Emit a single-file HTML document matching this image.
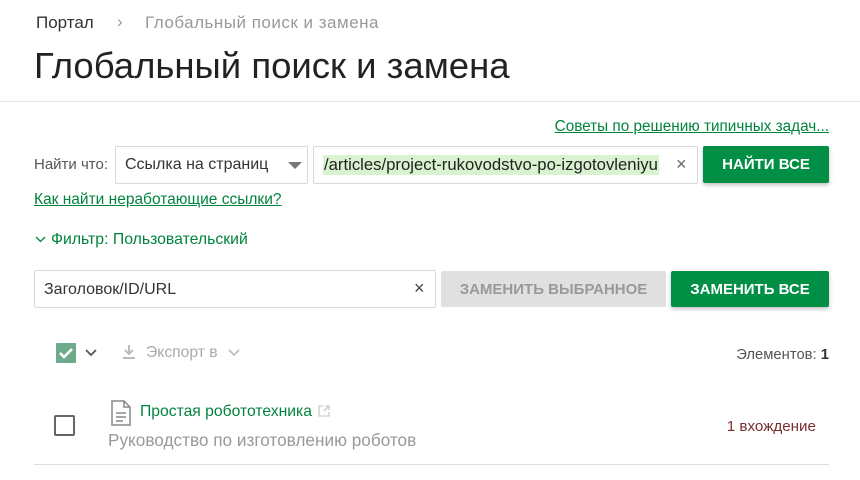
<!DOCTYPE html>
<html><head><meta charset="utf-8"><style>
*{box-sizing:border-box;margin:0;padding:0}
body{width:860px;height:480px;background:#fff;font-family:"Liberation Sans",sans-serif;color:#333;position:relative;overflow:hidden}
.a{position:absolute;white-space:nowrap}
.g{color:#00843d}
.box{position:absolute;border:1px solid #d9d9d9;border-radius:2px;background:#fff}
.btn{position:absolute;border-radius:2px;font-weight:bold;font-size:15px;color:#fff;background:#008f45;display:flex;align-items:center;justify-content:center;box-shadow:0 2px 4px rgba(0,0,0,.25)}
</style></head><body>
<div class="a" style="left:36px;top:13px;font-size:17px;color:#333">Портал</div>
<div class="a" style="left:117px;top:12px;font-size:17px;color:#999">›</div>
<div class="a" style="left:145px;top:13px;font-size:17px;letter-spacing:0.5px;color:#999">Глобальный поиск и замена</div>
<div class="a" style="left:34px;top:45px;font-size:36.5px;color:#222">Глобальный поиск и замена</div>
<div class="a" style="left:0;top:101px;width:860px;height:1px;background:#e6e6e6"></div>
<div class="a g" style="right:31px;top:118px;font-size:15.3px;text-decoration:underline">Советы по решению типичных задач...</div>
<div class="a" style="left:34px;top:156px;font-size:15px;color:#555">Найти что:</div>
<div class="box" style="left:115px;top:146px;width:193px;height:38px;overflow:hidden"><span class="a" style="left:9px;top:9px;font-size:16px;color:#333;width:143px;overflow:hidden">Ссылка на страницу</span><span class="a" style="left:172px;top:15px;width:0;height:0;border-left:7px solid transparent;border-right:7px solid transparent;border-top:7px solid #777"></span></div>
<div class="box" style="left:313px;top:146px;width:385px;height:38px;overflow:hidden"><span class="a" style="left:9px;top:8px;font-size:16.7px;color:#222;background:#d9f2cf;padding:0 1px">/articles/project-rukovodstvo-po-izgotovleniyu</span><span class="a" style="left:362px;top:7px;font-size:18px;color:#666">×</span></div>
<div class="btn" style="left:703px;top:146px;width:126px;height:37px">НАЙТИ ВСЕ</div>
<div class="a g" style="left:34px;top:191px;font-size:15.5px;text-decoration:underline">Как найти неработающие ссылки?</div>
<svg class="a" style="left:35px;top:236px" width="11" height="8"><path d="M1 1l4.5 4.5L10 1" stroke="#00843d" stroke-width="1.3" fill="none"/></svg>
<div class="a g" style="left:51px;top:231px;font-size:15.8px">Фильтр: Пользовательский</div>
<div class="box" style="left:34px;top:270px;width:402px;height:38px"><span class="a" style="left:9px;top:10px;font-size:16px;color:#333">Заголовок/ID/URL</span><span class="a" style="left:379px;top:7px;font-size:18px;color:#444">×</span></div>
<div class="a" style="left:441px;top:271px;width:225px;height:36px;background:#e0e0e0;border-radius:2px;color:#999;font-weight:bold;font-size:15px;display:flex;align-items:center;justify-content:center">ЗАМЕНИТЬ ВЫБРАННОЕ</div>
<div class="btn" style="left:671px;top:271px;width:158px;height:36px">ЗАМЕНИТЬ ВСЕ</div>
<div class="a" style="left:56px;top:343px;width:20px;height:20px;background:#6fa98c;border-radius:1px"></div>
<svg class="a" style="left:56px;top:343px" width="20" height="20"><path d="M4 10l4 4 8-8" stroke="#fff" stroke-width="2.6" fill="none"/></svg>
<svg class="a" style="left:85px;top:349px" width="12" height="8"><path d="M1 1l5 5 5-5" stroke="#555" stroke-width="1.8" fill="none"/></svg>
<svg class="a" style="left:121px;top:344px" width="16" height="16"><path d="M8 1v9M4 6l4 4 4-4M2 14h12" stroke="#bbb" stroke-width="2" fill="none"/></svg>
<div class="a" style="left:146px;top:344px;font-size:15.7px;color:#aaa">Экспорт в</div>
<svg class="a" style="left:228px;top:349px" width="12" height="8"><path d="M1 1l5 5 5-5" stroke="#bbb" stroke-width="1.6" fill="none"/></svg>
<div class="a" style="right:31px;top:347px;font-size:14.8px;color:#555">Элементов: <b style="color:#333">1</b></div>
<div class="a" style="left:54px;top:415px;width:21px;height:21px;border:2px solid #666;border-radius:2px"></div>
<svg class="a" style="left:110px;top:400px" width="22" height="26"><path d="M2 1h12l6 6v18H2z" fill="#fff" stroke="#888" stroke-width="1.5"/><path d="M14 1v6h6M6 13h10M6 17h10M6 21h7" stroke="#888" stroke-width="1.5" fill="none"/></svg>
<div class="a g" style="left:140px;top:403px;font-size:15.7px">Простая робототехника</div>
<svg class="a" style="left:318px;top:405px" width="12" height="12"><path d="M5 1H1v10h10V7M7 1h4v4M11 1L6 6" stroke="#ccc" stroke-width="1.3" fill="none"/></svg>
<div class="a" style="left:108px;top:430px;font-size:17.2px;color:#999">Руководство по изготовлению роботов</div>
<div class="a" style="right:44px;top:418px;font-size:15.2px;color:#7a2e2e">1 вхождение</div>
<div class="a" style="left:34px;top:464px;width:795px;height:1px;background:#ddd"></div>
</body></html>
